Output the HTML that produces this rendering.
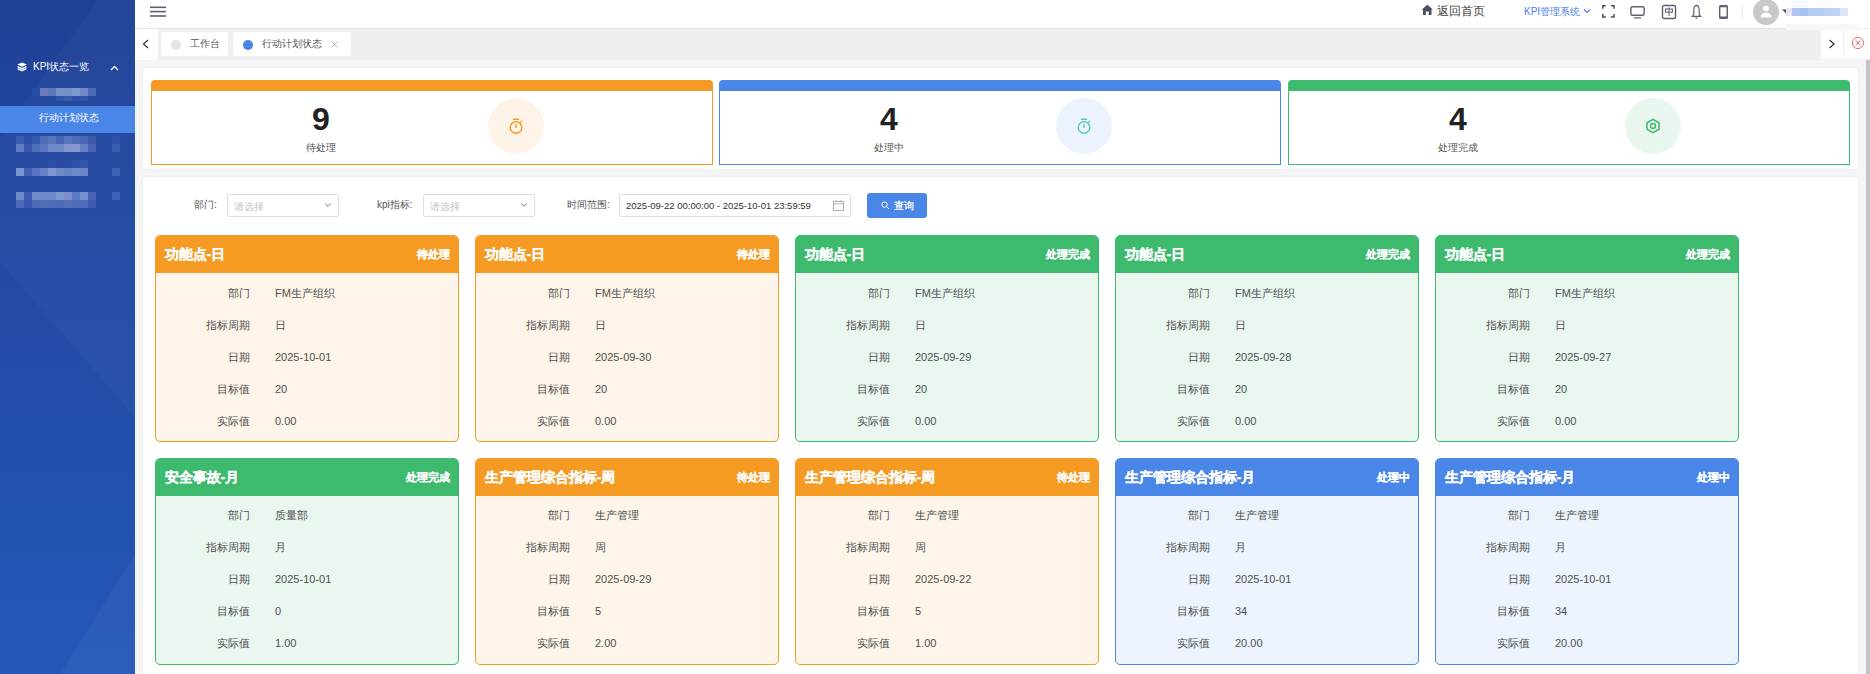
<!DOCTYPE html>
<html><head><meta charset="utf-8"><title>KPI</title>
<style>
*{box-sizing:border-box;margin:0;padding:0}
html,body{width:1870px;height:674px;overflow:hidden;background:#f4f5f7;font-family:"Liberation Sans",sans-serif;color:#606266}
.abs{position:absolute}
#side{position:absolute;left:0;top:0;width:135px;height:674px;background:#2144a0;overflow:hidden}
#hdr{position:absolute;left:135px;top:0;width:1735px;height:28px;background:#fff}
#tabs{position:absolute;left:135px;top:28px;width:1735px;height:31.5px;background:#efefef;box-shadow:inset 0 1px 1px #e4e4e4}
.tab{position:absolute;top:4px;height:24px;background:#fff;border-radius:2px;font-size:10px;color:#555;line-height:24px}
.panel{position:absolute;background:#fff;border-radius:4px;box-shadow:0 0 3px rgba(0,0,0,0.05)}
.scard{position:absolute;top:80px;width:562px;height:85px;border:1px solid;border-top:11px solid;border-radius:4px 4px 0 0;background:#fff}
.snum{position:absolute;left:129px;width:80px;text-align:center;top:11px;font-size:32px;font-weight:bold;color:#222;line-height:34px}
.slab{position:absolute;left:129px;width:80px;text-align:center;top:51px;font-size:10px;color:#555;line-height:12px}
.scirc{position:absolute;left:336px;top:7px;width:56px;height:56px;border-radius:50%}
.scirc svg{position:absolute;left:20px;top:19px}
.flab{position:absolute;top:198px;font-size:10px;color:#555;line-height:14px}
.sel{position:absolute;top:194px;height:22.5px;border:1px solid #dcdfe6;border-radius:2px;background:#fff;font-size:10px;line-height:24px;color:#c0c4cc}
.card{position:absolute;width:304px;height:207px;border:1px solid;border-radius:5px;overflow:hidden}
.ch{position:absolute;left:-1px;top:-1px;width:304px;height:38px;color:#fff}
.ct{position:absolute;left:9.5px;top:11px;font-size:14px;font-weight:bold;line-height:16px;-webkit-text-stroke:0.3px #fff}
.cs{position:absolute;right:9.5px;top:13px;font-size:11px;font-weight:bold;line-height:13px;-webkit-text-stroke:0.2px #fff}
.cb{position:absolute;left:0;top:41px;width:302px}
.row{position:relative;height:32px;font-size:11px;line-height:32px;color:#4f4f4f}
.lb{position:absolute;right:208px;}
.vl{position:absolute;left:119px;}
</style></head><body>
<div id="side">
 <svg class="abs" style="left:0;top:0" width="135" height="674" viewBox="0 0 135 674">
  <defs><linearGradient id="sg" x1="0" y1="0" x2="0" y2="1"><stop offset="0" stop-color="#1f4196"/><stop offset="1" stop-color="#2557b8"/></linearGradient></defs>
  <rect width="135" height="674" fill="url(#sg)"/>
  <polygon points="98,0 135,0 135,417 0,262 0,137" fill="#ffffff" opacity="0.025"/>
  <polygon points="135,554 135,674 60,674" fill="#ffffff" opacity="0.04"/>
 </svg>
 <svg class="abs" style="left:17px;top:62px" width="10" height="10" viewBox="0 0 10 10"><polygon points="5,0.4 9.8,2.6 5,4.8 0.2,2.6" fill="#fff"/><g fill="none" stroke="#fff" stroke-width="1.3"><polyline points="0.6,4.6 5,6.7 9.4,4.6"/><polyline points="0.6,6.6 5,8.7 9.4,6.6"/></g></svg>
 <div class="abs" style="left:33px;top:60px;font-size:10px;color:#fff;line-height:14px">KPI状态一览</div>
 <svg class="abs" style="left:110px;top:65px" width="9" height="6" viewBox="0 0 9 6"><polyline points="1,5 4.5,1.5 8,5" fill="none" stroke="#fff" stroke-width="1.4"/></svg>
 <div class="abs" style="left:32px;top:88px;width:8px;height:8px;background:#2450a8"></div><div class="abs" style="left:40px;top:88px;width:8px;height:8px;background:#7078c0"></div><div class="abs" style="left:48px;top:88px;width:8px;height:8px;background:#5a78b8"></div><div class="abs" style="left:56px;top:88px;width:8px;height:8px;background:#7890c8"></div><div class="abs" style="left:64px;top:88px;width:8px;height:8px;background:#7490c8"></div><div class="abs" style="left:72px;top:88px;width:8px;height:8px;background:#8098cc"></div><div class="abs" style="left:80px;top:88px;width:8px;height:8px;background:#7488c8"></div><div class="abs" style="left:88px;top:88px;width:8px;height:8px;background:#5068b8"></div><div class="abs" style="left:56px;top:96px;width:8px;height:5px;background:#3055aa"></div><div class="abs" style="left:64px;top:96px;width:8px;height:5px;background:#3c5aaa"></div><div class="abs" style="left:72px;top:96px;width:8px;height:5px;background:#2c4ea6"></div><div class="abs" style="left:80px;top:96px;width:8px;height:5px;background:#3354aa"></div><div class="abs" style="left:16px;top:136px;width:8px;height:8px;background:#3a5cb0"></div><div class="abs" style="left:24px;top:136px;width:8px;height:8px;background:#2d4da8"></div><div class="abs" style="left:32px;top:136px;width:8px;height:8px;background:#3358b0"></div><div class="abs" style="left:40px;top:136px;width:8px;height:8px;background:#4e6cb8"></div><div class="abs" style="left:48px;top:136px;width:8px;height:8px;background:#5673bc"></div><div class="abs" style="left:56px;top:136px;width:8px;height:8px;background:#4565b5"></div><div class="abs" style="left:64px;top:136px;width:8px;height:8px;background:#5575bb"></div><div class="abs" style="left:72px;top:136px;width:8px;height:8px;background:#4e6db8"></div><div class="abs" style="left:80px;top:136px;width:8px;height:8px;background:#4a68b5"></div><div class="abs" style="left:88px;top:136px;width:8px;height:8px;background:#3a58ac"></div><div class="abs" style="left:112px;top:136px;width:8px;height:8px;background:#3050aa"></div><div class="abs" style="left:16px;top:144px;width:8px;height:8px;background:#5d7ec4"></div><div class="abs" style="left:24px;top:144px;width:8px;height:8px;background:#3c55aa"></div><div class="abs" style="left:32px;top:144px;width:8px;height:8px;background:#4a70b5"></div><div class="abs" style="left:40px;top:144px;width:8px;height:8px;background:#5a78c0"></div><div class="abs" style="left:48px;top:144px;width:8px;height:8px;background:#6f88c5"></div><div class="abs" style="left:56px;top:144px;width:8px;height:8px;background:#6c88c6"></div><div class="abs" style="left:64px;top:144px;width:8px;height:8px;background:#8296c8"></div><div class="abs" style="left:72px;top:144px;width:8px;height:8px;background:#8598d0"></div><div class="abs" style="left:80px;top:144px;width:8px;height:8px;background:#6383c5"></div><div class="abs" style="left:88px;top:144px;width:8px;height:8px;background:#4a62b0"></div><div class="abs" style="left:112px;top:144px;width:8px;height:8px;background:#3a5bb0"></div><div class="abs" style="left:48px;top:160px;width:8px;height:8px;background:#2d4fa5"></div><div class="abs" style="left:56px;top:160px;width:8px;height:8px;background:#2848a2"></div><div class="abs" style="left:64px;top:160px;width:8px;height:8px;background:#2a4ca6"></div><div class="abs" style="left:72px;top:160px;width:8px;height:8px;background:#2f50a8"></div><div class="abs" style="left:80px;top:160px;width:8px;height:8px;background:#3555aa"></div><div class="abs" style="left:16px;top:168px;width:8px;height:8px;background:#7896d0"></div><div class="abs" style="left:24px;top:168px;width:8px;height:8px;background:#4460b0"></div><div class="abs" style="left:32px;top:168px;width:8px;height:8px;background:#5a70c0"></div><div class="abs" style="left:40px;top:168px;width:8px;height:8px;background:#6585c8"></div><div class="abs" style="left:48px;top:168px;width:8px;height:8px;background:#7f96d0"></div><div class="abs" style="left:56px;top:168px;width:8px;height:8px;background:#6e8ac4"></div><div class="abs" style="left:64px;top:168px;width:8px;height:8px;background:#6484c4"></div><div class="abs" style="left:72px;top:168px;width:8px;height:8px;background:#6a8ccc"></div><div class="abs" style="left:80px;top:168px;width:8px;height:8px;background:#6a84c8"></div><div class="abs" style="left:112px;top:168px;width:8px;height:8px;background:#4060b5"></div><div class="abs" style="left:16px;top:192px;width:8px;height:8px;background:#6a8ac8"></div><div class="abs" style="left:24px;top:192px;width:8px;height:8px;background:#3e5ab0"></div><div class="abs" style="left:32px;top:192px;width:8px;height:8px;background:#6f8dc8"></div><div class="abs" style="left:40px;top:192px;width:8px;height:8px;background:#6f88c8"></div><div class="abs" style="left:48px;top:192px;width:8px;height:8px;background:#7088c8"></div><div class="abs" style="left:56px;top:192px;width:8px;height:8px;background:#7c98cc"></div><div class="abs" style="left:64px;top:192px;width:8px;height:8px;background:#7e8cc8"></div><div class="abs" style="left:72px;top:192px;width:8px;height:8px;background:#5a7ac8"></div><div class="abs" style="left:80px;top:192px;width:8px;height:8px;background:#7690d0"></div><div class="abs" style="left:88px;top:192px;width:8px;height:8px;background:#4a64b5"></div><div class="abs" style="left:112px;top:192px;width:8px;height:8px;background:#3e62b5"></div><div class="abs" style="left:16px;top:200px;width:8px;height:8px;background:#4a6ab8"></div><div class="abs" style="left:24px;top:200px;width:8px;height:8px;background:#3656b0"></div><div class="abs" style="left:32px;top:200px;width:8px;height:8px;background:#4a6ab8"></div><div class="abs" style="left:40px;top:200px;width:8px;height:8px;background:#5070b8"></div><div class="abs" style="left:48px;top:200px;width:8px;height:8px;background:#4c6cb5"></div><div class="abs" style="left:56px;top:200px;width:8px;height:8px;background:#4a6ab5"></div><div class="abs" style="left:64px;top:200px;width:8px;height:8px;background:#5472bc"></div><div class="abs" style="left:72px;top:200px;width:8px;height:8px;background:#4c6cb8"></div><div class="abs" style="left:80px;top:200px;width:8px;height:8px;background:#4e6abc"></div><div class="abs" style="left:88px;top:200px;width:8px;height:8px;background:#3c58b0"></div>
 <div class="abs" style="left:0;top:105.5px;width:135px;height:27px;background:#4a86e8"></div>
 <div class="abs" style="left:39px;top:111px;font-size:10px;color:#fff;line-height:14px">行动计划状态</div>
</div>
<div id="hdr">
 <svg class="abs" style="left:15px;top:6px" width="16" height="12" viewBox="0 0 16 12"><g stroke="#5a6170" stroke-width="1.6"><line x1="0" y1="1.3" x2="16" y2="1.3"/><line x1="0" y1="5.6" x2="16" y2="5.6"/><line x1="0" y1="10" x2="16" y2="10"/></g></svg>
</div>
<svg class="abs" style="left:1421px;top:4px" width="13" height="12" viewBox="0 0 13 12"><path d="M6.3,0.8 L11.8,5.6 L10.5,5.6 L10.5,10.9 L7.7,10.9 L7.7,7.5 L4.8,7.5 L4.8,10.9 L2,10.9 L2,5.6 L0.8,5.6 Z" fill="#4a5060"/></svg>
<div class="abs" style="left:1437px;top:4px;font-size:12px;line-height:14px;color:#444">返回首页</div>
<div class="abs" style="left:1524px;top:5px;font-size:10px;line-height:13px;color:#4a7fe8">KPI管理系统</div>
<svg class="abs" style="left:1583px;top:8px" width="8" height="6" viewBox="0 0 8 6"><polyline points="1,1.5 4,4.5 7,1.5" fill="none" stroke="#4a7fe8" stroke-width="1.1"/></svg>
<svg class="abs" style="left:1602px;top:5px" width="13" height="13" viewBox="0 0 13 13"><g fill="none" stroke="#4a5060" stroke-width="1.5"><polyline points="0.8,3.8 0.8,0.8 3.8,0.8"/><polyline points="9,0.8 12,0.8 12,3.8"/><polyline points="0.8,9 0.8,12 3.8,12"/><polyline points="9,12 12,12 12,9"/></g></svg>
<svg class="abs" style="left:1629px;top:5px" width="17" height="15" viewBox="0 0 17 15"><g fill="none" stroke="#5a6170" stroke-width="1.4"><rect x="1.9" y="1.7" width="13.2" height="8.6" rx="1.5"/><line x1="5" y1="12.9" x2="12" y2="12.9" stroke-width="1.2"/></g></svg>
<svg class="abs" style="left:1661px;top:4px" width="16" height="16" viewBox="0 0 16 16"><g fill="none" stroke="#5a6170" stroke-width="1.4"><rect x="1.5" y="1.5" width="13" height="13" rx="1.8"/><rect x="4.6" y="5" width="6.8" height="3.2" stroke-width="1"/><line x1="8" y1="3.5" x2="8" y2="12" stroke-width="1"/></g></svg>
<svg class="abs" style="left:1690px;top:4px" width="13" height="16" viewBox="0 0 13 16"><g fill="none" stroke="#5a6170" stroke-width="1.2"><path d="M6.5,1.3 C4.4,1.6 3.8,3.8 3.8,6.3 L3.8,10.6 L2.3,12.3 L10.7,12.3 L9.2,10.6 L9.2,6.3 C9.2,3.8 8.6,1.6 6.5,1.3 Z"/><path d="M5.5,13.6 Q6.5,14.8 7.5,13.6"/></g></svg>
<svg class="abs" style="left:1718px;top:4px" width="11" height="16" viewBox="0 0 11 16"><g fill="#5a6170"><path d="M2.5,1 H8.5 Q10,1 10,2.5 V13.5 Q10,15 8.5,15 H2.5 Q1,15 1,13.5 V2.5 Q1,1 2.5,1 Z M2.4,3.2 V12.6 H8.6 V3.2 Z"/></g></svg>
<div class="abs" style="left:1742px;top:5px;width:1px;height:15px;background:#e8e8e8"></div>
<div class="abs" style="left:1753px;top:-1px;width:26px;height:26px;border-radius:50%;background:#c8c8c8"></div>
<svg class="abs" style="left:1759px;top:5px" width="14" height="13" viewBox="0 0 14 13"><g fill="#fff"><circle cx="7" cy="3.6" r="2.9"/><path d="M1.5,12.5 Q1.8,7.8 7,7.8 Q12.2,7.8 12.5,12.5 Z"/></g></svg>
<svg class="abs" style="left:1782px;top:9px" width="6" height="5" viewBox="0 0 6 5"><polygon points="0,0.5 5,0.5 4,4.5" fill="#4a5060"/></svg>
<div class="abs" style="left:1786px;top:8px;width:6px;height:8px;background:#e6eaf0"></div>
<div class="abs" style="left:1792px;top:8px;width:8px;height:8px;background:#b4c4f2"></div>
<div class="abs" style="left:1800px;top:8px;width:8px;height:8px;background:#a6c0f0"></div>
<div class="abs" style="left:1808px;top:8px;width:8px;height:8px;background:#b2cbf4"></div>
<div class="abs" style="left:1816px;top:8px;width:8px;height:8px;background:#b5cef6"></div>
<div class="abs" style="left:1824px;top:8px;width:8px;height:8px;background:#bcd0f4"></div>
<div class="abs" style="left:1832px;top:8px;width:8px;height:8px;background:#c0d2f4"></div>
<div class="abs" style="left:1840px;top:8px;width:8px;height:8px;background:#dbe6f8"></div>
<div class="abs" style="left:1792px;top:0px;width:16px;height:7px;background:#f8f9fe"></div>
<div class="abs" style="left:1816px;top:0px;width:16px;height:7px;background:#fafbfe"></div>

<div id="tabs">
 <div class="abs" style="left:0;top:0.5px;width:23px;height:31px;background:#fff"></div>
 <svg class="abs" style="left:7px;top:11px" width="8" height="10" viewBox="0 0 8 10"><polyline points="6,1 1.5,5 6,9" fill="none" stroke="#333" stroke-width="1.2"/></svg>
 <div class="tab" style="left:26px;width:67px"><span class="abs" style="left:10px;top:7.5px;width:10px;height:10px;border-radius:50%;background:#e4e6ea"></span><span class="abs" style="left:29px">工作台</span></div>
 <div class="tab" style="left:98px;width:118px"><span class="abs" style="left:10px;top:7.5px;width:10px;height:10px;border-radius:50%;background:#4a86e8"></span><span class="abs" style="left:29px">行动计划状态</span><svg class="abs" style="left:98px;top:8.5px" width="7" height="7" viewBox="0 0 7 7"><g stroke="#aaa" stroke-width="0.9"><line x1="0.5" y1="0.5" x2="6.5" y2="6.5"/><line x1="6.5" y1="0.5" x2="0.5" y2="6.5"/></g></svg></div>
 <div class="abs" style="left:1686px;top:2px;width:22px;height:29px;background:#fff"></div>
 <svg class="abs" style="left:1693px;top:11px" width="8" height="10" viewBox="0 0 8 10"><polyline points="1.5,1 6,5 1.5,9" fill="none" stroke="#333" stroke-width="1.2"/></svg>
 <div class="abs" style="left:1708px;top:2px;width:27px;height:29px;background:#fff;border-left:1px solid #eee"></div>
 <svg class="abs" style="left:1716px;top:8px" width="14" height="14" viewBox="0 0 14 14"><g fill="none" stroke="#f56c6c" stroke-width="1"><circle cx="7" cy="7" r="5.6"/><line x1="4.6" y1="4.6" x2="9.4" y2="9.4"/><line x1="9.4" y1="4.6" x2="4.6" y2="9.4"/></g></svg>
</div>
<div class="abs" style="left:1786px;top:24px;width:72px;height:6px;background:#f7f7f7"></div>
<div class="abs" style="left:1858px;top:28px;width:12px;height:2px;background:#fff;border-top:1px solid #ececec"></div>
<div id="main">
 <div class="abs" style="left:1866px;top:60px;width:4px;height:614px;background:#c2c3c7"></div>
 <div class="panel" style="left:143px;top:68px;width:1715px;height:101px"></div>
 <div class="scard" style="left:151px;border-color:#f59a23"><div class="snum">9</div><div class="slab">待处理</div><div class="scirc" style="background:#fdf3e7"><svg width="16" height="18" viewBox="0 0 16 18"><g fill="none" stroke="#f59a23" stroke-width="1.4" stroke-linecap="round"><circle cx="8" cy="10.5" r="5.8"/><line x1="5.5" y1="2.2" x2="10.5" y2="2.2"/><line x1="8" y1="7.6" x2="8" y2="10.6"/><line x1="12.4" y1="5.3" x2="13.6" y2="4.3"/></g></svg></div></div>
 <div class="scard" style="left:719px;border-color:#4a86e8"><div class="snum">4</div><div class="slab">处理中</div><div class="scirc" style="background:#edf3fc"><svg width="16" height="18" viewBox="0 0 16 18"><g fill="none" stroke="#55cbbf" stroke-width="1.4" stroke-linecap="round"><circle cx="8" cy="10.5" r="5.8"/><line x1="5.5" y1="2.2" x2="10.5" y2="2.2"/><line x1="8" y1="7.6" x2="8" y2="10.6"/><line x1="12.4" y1="5.3" x2="13.6" y2="4.3"/></g></svg></div></div>
 <div class="scard" style="left:1288px;border-color:#3dba6e"><div class="snum">4</div><div class="slab">处理完成</div><div class="scirc" style="background:#e9f6ee"><svg width="16" height="18" viewBox="0 0 16 18"><g fill="none" stroke="#3dba6e" stroke-width="1.5"><polygon points="8,2.4 14,5.8 14,12.2 8,15.6 2,12.2 2,5.8"/><circle cx="8" cy="9" r="2.4"/></g></svg></div></div>
 <div class="panel" style="left:143px;top:176.5px;width:1715px;height:520px"></div>
 <div class="flab" style="left:194px">部门:</div>
 <div class="sel" style="left:227px;width:112px"><span class="abs" style="left:6px">请选择</span><svg class="abs" style="left:96px;top:7px" width="8" height="6" viewBox="0 0 8 6"><polyline points="1.2,1.5 4,4.3 6.8,1.5" fill="none" stroke="#777" stroke-width="1"/></svg></div>
 <div class="flab" style="left:377px">kpi指标:</div>
 <div class="sel" style="left:423px;width:112px"><span class="abs" style="left:6px">请选择</span><svg class="abs" style="left:96px;top:7px" width="8" height="6" viewBox="0 0 8 6"><polyline points="1.2,1.5 4,4.3 6.8,1.5" fill="none" stroke="#777" stroke-width="1"/></svg></div>
 <div class="flab" style="left:567px">时间范围:</div>
 <div class="sel" style="left:619px;width:232px;color:#333"><span class="abs" style="left:6px;top:-1.5px;font-size:9.5px">2025-09-22 00:00:00 - 2025-10-01 23:59:59</span><svg class="abs" style="left:213px;top:5px" width="11" height="11" viewBox="0 0 11 11"><g fill="none" stroke="#aaa" stroke-width="0.9"><rect x="0.5" y="1.5" width="10" height="9"/><line x1="0.5" y1="3.8" x2="10.5" y2="3.8"/><line x1="3" y1="0" x2="3" y2="2"/><line x1="8" y1="0" x2="8" y2="2"/></g></svg></div>
 <div class="abs" style="left:867px;top:193px;width:60px;height:24.5px;background:#4a86e8;border-radius:3px;color:#fff;font-size:10px;line-height:24px"><svg class="abs" style="left:14px;top:8px" width="9" height="9" viewBox="0 0 9 9"><g fill="none" stroke="#fff" stroke-width="1"><circle cx="3.6" cy="3.6" r="2.7"/><line x1="5.6" y1="5.6" x2="8" y2="8"/></g></svg><span class="abs" style="left:27px;top:0.5px;-webkit-text-stroke:0.25px #fff">查询</span></div>
 <div class="card" style="left:155px;top:235px;border-color:#f59a23;background:#fdf5ea"><div class="ch" style="background:#f59a23"><span class="ct">功能点-日</span><span class="cs">待处理</span></div><div class="cb" style="top:41px"><div class="row"><span class="lb">部门</span><span class="vl">FM生产组织</span></div><div class="row"><span class="lb">指标周期</span><span class="vl">日</span></div><div class="row"><span class="lb">日期</span><span class="vl">2025-10-01</span></div><div class="row"><span class="lb">目标值</span><span class="vl">20</span></div><div class="row"><span class="lb">实际值</span><span class="vl">0.00</span></div></div></div>
<div class="card" style="left:475px;top:235px;border-color:#f59a23;background:#fdf5ea"><div class="ch" style="background:#f59a23"><span class="ct">功能点-日</span><span class="cs">待处理</span></div><div class="cb" style="top:41px"><div class="row"><span class="lb">部门</span><span class="vl">FM生产组织</span></div><div class="row"><span class="lb">指标周期</span><span class="vl">日</span></div><div class="row"><span class="lb">日期</span><span class="vl">2025-09-30</span></div><div class="row"><span class="lb">目标值</span><span class="vl">20</span></div><div class="row"><span class="lb">实际值</span><span class="vl">0.00</span></div></div></div>
<div class="card" style="left:795px;top:235px;border-color:#3dba6e;background:#eaf7ef"><div class="ch" style="background:#3dba6e"><span class="ct">功能点-日</span><span class="cs">处理完成</span></div><div class="cb" style="top:41px"><div class="row"><span class="lb">部门</span><span class="vl">FM生产组织</span></div><div class="row"><span class="lb">指标周期</span><span class="vl">日</span></div><div class="row"><span class="lb">日期</span><span class="vl">2025-09-29</span></div><div class="row"><span class="lb">目标值</span><span class="vl">20</span></div><div class="row"><span class="lb">实际值</span><span class="vl">0.00</span></div></div></div>
<div class="card" style="left:1115px;top:235px;border-color:#3dba6e;background:#eaf7ef"><div class="ch" style="background:#3dba6e"><span class="ct">功能点-日</span><span class="cs">处理完成</span></div><div class="cb" style="top:41px"><div class="row"><span class="lb">部门</span><span class="vl">FM生产组织</span></div><div class="row"><span class="lb">指标周期</span><span class="vl">日</span></div><div class="row"><span class="lb">日期</span><span class="vl">2025-09-28</span></div><div class="row"><span class="lb">目标值</span><span class="vl">20</span></div><div class="row"><span class="lb">实际值</span><span class="vl">0.00</span></div></div></div>
<div class="card" style="left:1435px;top:235px;border-color:#3dba6e;background:#eaf7ef"><div class="ch" style="background:#3dba6e"><span class="ct">功能点-日</span><span class="cs">处理完成</span></div><div class="cb" style="top:41px"><div class="row"><span class="lb">部门</span><span class="vl">FM生产组织</span></div><div class="row"><span class="lb">指标周期</span><span class="vl">日</span></div><div class="row"><span class="lb">日期</span><span class="vl">2025-09-27</span></div><div class="row"><span class="lb">目标值</span><span class="vl">20</span></div><div class="row"><span class="lb">实际值</span><span class="vl">0.00</span></div></div></div>
<div class="card" style="left:155px;top:458px;border-color:#3dba6e;background:#eaf7ef"><div class="ch" style="background:#3dba6e"><span class="ct">安全事故-月</span><span class="cs">处理完成</span></div><div class="cb" style="top:40px"><div class="row"><span class="lb">部门</span><span class="vl">质量部</span></div><div class="row"><span class="lb">指标周期</span><span class="vl">月</span></div><div class="row"><span class="lb">日期</span><span class="vl">2025-10-01</span></div><div class="row"><span class="lb">目标值</span><span class="vl">0</span></div><div class="row"><span class="lb">实际值</span><span class="vl">1.00</span></div></div></div>
<div class="card" style="left:475px;top:458px;border-color:#f59a23;background:#fdf5ea"><div class="ch" style="background:#f59a23"><span class="ct">生产管理综合指标-周</span><span class="cs">待处理</span></div><div class="cb" style="top:40px"><div class="row"><span class="lb">部门</span><span class="vl">生产管理</span></div><div class="row"><span class="lb">指标周期</span><span class="vl">周</span></div><div class="row"><span class="lb">日期</span><span class="vl">2025-09-29</span></div><div class="row"><span class="lb">目标值</span><span class="vl">5</span></div><div class="row"><span class="lb">实际值</span><span class="vl">2.00</span></div></div></div>
<div class="card" style="left:795px;top:458px;border-color:#f59a23;background:#fdf5ea"><div class="ch" style="background:#f59a23"><span class="ct">生产管理综合指标-周</span><span class="cs">待处理</span></div><div class="cb" style="top:40px"><div class="row"><span class="lb">部门</span><span class="vl">生产管理</span></div><div class="row"><span class="lb">指标周期</span><span class="vl">周</span></div><div class="row"><span class="lb">日期</span><span class="vl">2025-09-22</span></div><div class="row"><span class="lb">目标值</span><span class="vl">5</span></div><div class="row"><span class="lb">实际值</span><span class="vl">1.00</span></div></div></div>
<div class="card" style="left:1115px;top:458px;border-color:#4a86e8;background:#edf3fc"><div class="ch" style="background:#4a86e8"><span class="ct">生产管理综合指标-月</span><span class="cs">处理中</span></div><div class="cb" style="top:40px"><div class="row"><span class="lb">部门</span><span class="vl">生产管理</span></div><div class="row"><span class="lb">指标周期</span><span class="vl">月</span></div><div class="row"><span class="lb">日期</span><span class="vl">2025-10-01</span></div><div class="row"><span class="lb">目标值</span><span class="vl">34</span></div><div class="row"><span class="lb">实际值</span><span class="vl">20.00</span></div></div></div>
<div class="card" style="left:1435px;top:458px;border-color:#4a86e8;background:#edf3fc"><div class="ch" style="background:#4a86e8"><span class="ct">生产管理综合指标-月</span><span class="cs">处理中</span></div><div class="cb" style="top:40px"><div class="row"><span class="lb">部门</span><span class="vl">生产管理</span></div><div class="row"><span class="lb">指标周期</span><span class="vl">月</span></div><div class="row"><span class="lb">日期</span><span class="vl">2025-10-01</span></div><div class="row"><span class="lb">目标值</span><span class="vl">34</span></div><div class="row"><span class="lb">实际值</span><span class="vl">20.00</span></div></div></div>
</div>
</body></html>
